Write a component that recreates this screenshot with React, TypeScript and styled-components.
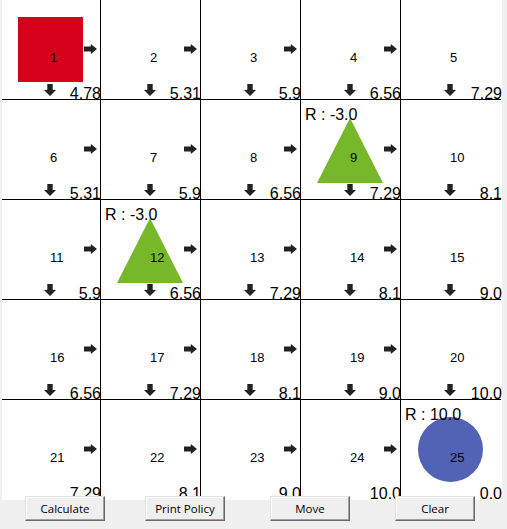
import styled, { createGlobalStyle } from 'styled-components'

type TShape = 'square' | 'triangle' | 'circle'

type TCell = {
	id: number
	value: string
	right: boolean
	down: boolean
	shape?: TShape
	reward?: string
}

const VALUES = [
	['4.78', '5.31', '5.9', '6.56', '7.29'],
	['5.31', '5.9', '6.56', '7.29', '8.1'],
	['5.9', '6.56', '7.29', '8.1', '9.0'],
	['6.56', '7.29', '8.1', '9.0', '10.0'],
	['7.29', '8.1', '9.0', '10.0', '0.0'],
]

const SPECIAL: Record<number, { shape: TShape; reward?: string }> = {
	1: { shape: 'square' },
	9: { shape: 'triangle', reward: 'R : -3.0' },
	12: { shape: 'triangle', reward: 'R : -3.0' },
	25: { shape: 'circle', reward: 'R : 10.0' },
}

const cells: TCell[] = VALUES.flatMap((row, r) =>
	row.map((value, c) => {
		const id = r * 5 + c + 1
		return {
			id,
			value,
			right: c < 4,
			down: r < 4,
			...SPECIAL[id],
		}
	})
)

const Shape = ({ kind }: { kind: TShape }) => {
	if (kind === 'square') return <Square />
	if (kind === 'circle') return <Circle />
	return (
		<Triangle width='66' height='66' viewBox='0 0 66 66'>
			<polygon points='33,1 66,66 0,66' fill='#76b82a' />
		</Triangle>
	)
}

const App = () => {
	return (
		<>
			<GlobalStyle />
			<Window>
				<Board>
					<Grid>
						{cells.map(cell => (
							<Cell key={cell.id} $lastCol={cell.id % 5 === 0} $lastRow={cell.id > 20}>
								{cell.shape && <Shape kind={cell.shape} />}
								{cell.reward && <Reward>{cell.reward}</Reward>}
								<Label>{cell.id}</Label>
								{cell.right && (
									<RightArrow width='13' height='10' viewBox='0 0 13 10'>
										<path d='M0 2.6H6.8V0L13 5L6.8 10V7.4H0Z' fill='#222' />
									</RightArrow>
								)}
								{cell.down && (
									<DownArrow width='12' height='12' viewBox='0 0 12 12'>
										<path d='M3.3 0H8.7V6H12L6 12L0 6H3.3Z' fill='#222' />
									</DownArrow>
								)}
								<Value>{cell.value}</Value>
							</Cell>
						))}
					</Grid>
				</Board>
				<Buttons>
					<Button $offset={25}>Calculate</Button>
					<Button $offset={40}>Print Policy</Button>
					<Button $offset={45}>Move</Button>
					<Button $offset={45}>Clear</Button>
				</Buttons>
			</Window>
		</>
	)
}

export default App

const GlobalStyle = createGlobalStyle`
	html, body {
		margin: 0;
		padding: 0;
		background: #f0f0f0;
	}
`

const Window = styled.div`
	width: 507px;
	height: 529px;
	overflow: hidden;
	background: #f0f0f0;
`

const Board = styled.div`
	margin-left: 2px;
	width: 500px;
	height: 500px;
	background: #ffffff;
	overflow: hidden;
`

const Grid = styled.div`
	display: grid;
	grid-template-columns: repeat(5, 100px);
	grid-template-rows: repeat(5, 100px);
	margin-left: -1px;
`

/* Клетка: сетка 5x5 — фигура в середине, стрелки и значение по краям */
const Cell = styled.div<{ $lastCol: boolean; $lastRow: boolean }>`
	display: grid;
	grid-template-columns: 17px 26px 12px 27px minmax(0, 1fr);
	grid-template-rows: 17px 27px 10px 28px minmax(0, 1fr);
	box-sizing: border-box;
	border-right: ${p => (p.$lastCol ? 'none' : '1px solid #000')};
	border-bottom: ${p => (p.$lastRow ? 'none' : '1px solid #000')};
	font-family: 'Liberation Sans', Arial, sans-serif;
	color: #000;
`

const Square = styled.div`
	grid-area: 2 / 2 / 5 / 5;
	background: #d7001b;
`

const Circle = styled.div`
	grid-area: 2 / 2 / 5 / 5;
	border-radius: 50%;
	background: #5262b4;
`

const Triangle = styled.svg`
	grid-area: 2 / 2 / 5 / 5;
	margin-left: -1px;
`

const Reward = styled.span`
	grid-area: 1 / 1 / 3 / 6;
	align-self: start;
	padding: 7px 0 0 4px;
	font-size: 16px;
	line-height: 16px;
	white-space: nowrap;
`

const Label = styled.span`
	grid-area: 3 / 3 / 5 / 5;
	align-self: start;
	padding: 7px 0 0 6px;
	font-size: 13px;
	line-height: 13px;
`

const RightArrow = styled.svg`
	grid-area: 3 / 5;
	margin-left: 1px;
`

const DownArrow = styled.svg`
	grid-area: 5 / 3;
	margin-top: 2px;
`

const Value = styled.span`
	grid-area: 5 / 3 / 6 / 6;
	justify-self: end;
	align-self: start;
	margin: 4px -1px 0 0;
	font-size: 16px;
	line-height: 16px;
	white-space: nowrap;
`

const Buttons = styled.div`
	position: relative;
	display: flex;
	margin-top: -4px;
`

const Button = styled.button<{ $offset: number }>`
	box-sizing: border-box;
	margin: 0 0 0 ${p => p.$offset}px;
	width: 80px;
	height: 25px;
	padding: 0;
	font-family: 'Open Sans', 'Noto Sans', sans-serif;
	font-size: 11.5px;
	color: #000;
	background: #efefef;
	border: 1px solid;
	border-color: #e3e3e3 #696969 #696969 #e3e3e3;
	box-shadow: inset -1px -1px #a0a0a0, inset 1px 1px #ffffff;
	border-radius: 0;
	cursor: pointer;
`
